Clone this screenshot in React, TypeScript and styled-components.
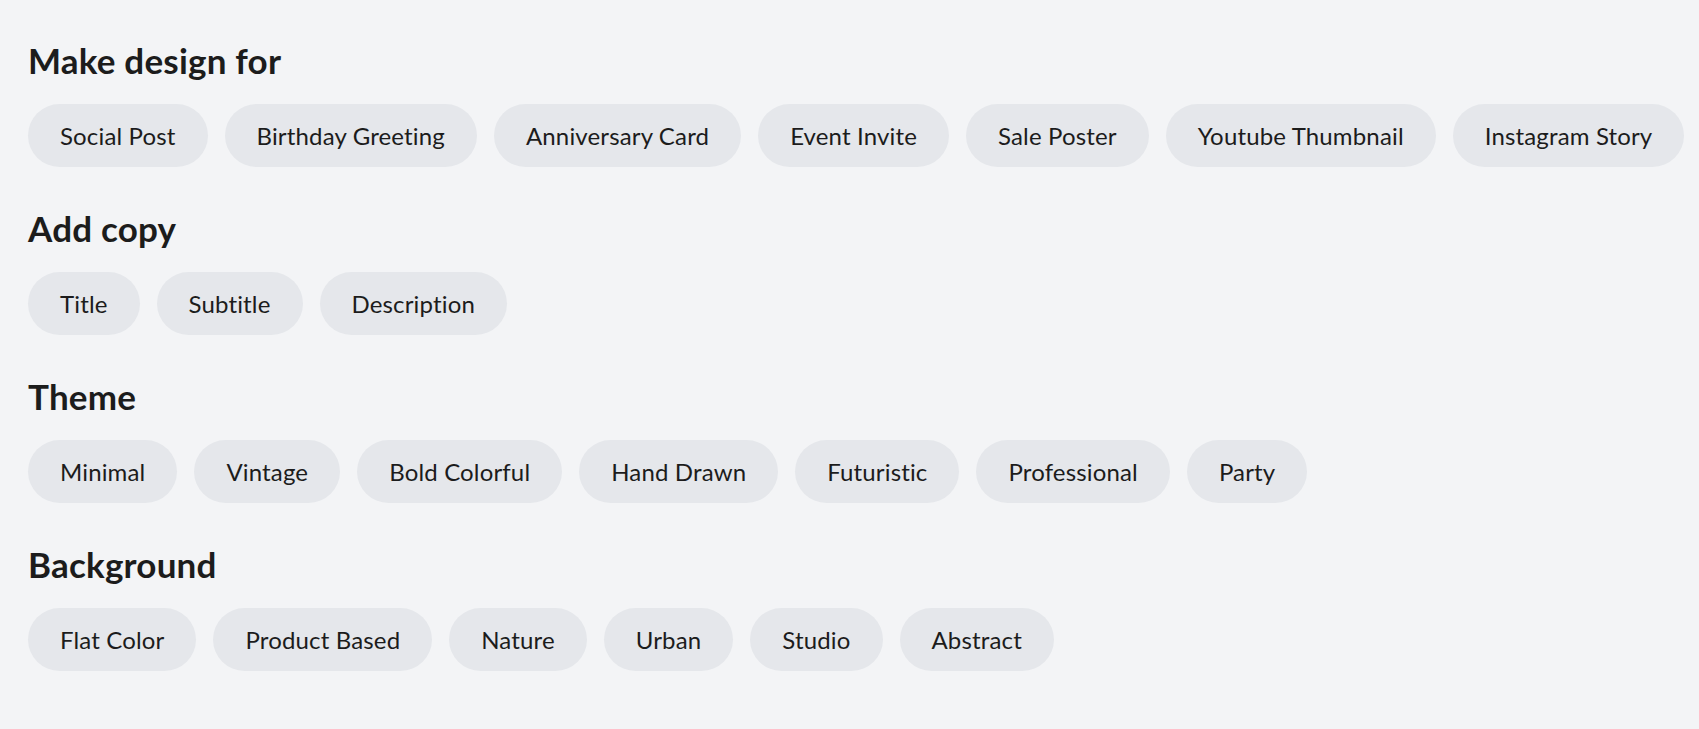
import styled, { createGlobalStyle } from 'styled-components';

const GlobalStyle = createGlobalStyle`
  html, body {
    margin: 0;
    padding: 0;
    background: #f3f4f6;
  }
  body {
    font-family: Lato, "Noto Sans", sans-serif;
    color: #1c1c1c;
  }
`;

const Page = styled.div`
  display: flex;
  flex-direction: column;
  gap: 41px;
  padding: 40px 6px 40px 28px;
`;

const Section = styled.section`
  display: flex;
  flex-direction: column;
  gap: 24px;
`;

const Heading = styled.h2`
  margin: 0;
  font-size: 35px;
  line-height: 40px;
  font-weight: 700;
  letter-spacing: 0.2px;
`;

const ChipRow = styled.div`
  display: flex;
  flex-wrap: wrap;
  gap: 17px;
`;

const Chip = styled.button`
  height: 63px;
  padding: 0 32px;
  border: none;
  border-radius: 999px;
  background: #e5e7eb;
  color: #1c1c1c;
  font-family: inherit;
  font-size: 24px;
  font-weight: 400;
  letter-spacing: 0.15px;
  white-space: nowrap;
  cursor: pointer;
`;

const groups: { title: string; items: string[] }[] = [
  {
    title: 'Make design for',
    items: [
      'Social Post',
      'Birthday Greeting',
      'Anniversary Card',
      'Event Invite',
      'Sale Poster',
      'Youtube Thumbnail',
      'Instagram Story',
    ],
  },
  { title: 'Add copy', items: ['Title', 'Subtitle', 'Description'] },
  {
    title: 'Theme',
    items: ['Minimal', 'Vintage', 'Bold Colorful', 'Hand Drawn', 'Futuristic', 'Professional', 'Party'],
  },
  {
    title: 'Background',
    items: ['Flat Color', 'Product Based', 'Nature', 'Urban', 'Studio', 'Abstract'],
  },
];

export default function App() {
  return (
    <>
      <GlobalStyle />
      <Page>
        {groups.map((g) => (
          <Section key={g.title}>
            <Heading>{g.title}</Heading>
            <ChipRow>
              {g.items.map((item) => (
                <Chip key={item} type='button'>
                  {item}
                </Chip>
              ))}
            </ChipRow>
          </Section>
        ))}
      </Page>
    </>
  );
}
